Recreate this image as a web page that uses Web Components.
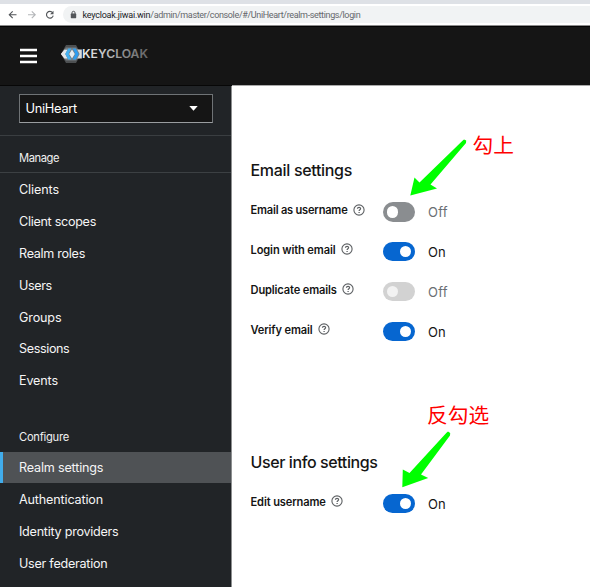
<!DOCTYPE html>
<html lang="en">
<head>
<meta charset="utf-8">
<title>Keycloak Administration Console</title>
<style>
html,body{margin:0;height:100%;overflow:hidden;background:#fff}
body{font-family:Inter,"Liberation Sans","Noto Sans CJK SC",sans-serif}
</style>
</head>
<body>
<admin-console></admin-console>
<script>
const define=(name,html,setup)=>customElements.define(name,class extends HTMLElement{
  connectedCallback(){
    if(this.shadowRoot)return;
    const t=document.createElement('template');
    t.innerHTML=html;
    this.attachShadow({mode:'open'}).append(t.content.cloneNode(true));
    if(setup)setup(this,this.shadowRoot);
  }
});

/* A single line of text tracked to the width given in its "w" attribute. */
define('tracked-text',`<style>:host{display:inline-block;white-space:pre}span{display:inline-block}</style><span><slot></slot></span>`,(el,root)=>{
  const s=root.querySelector('span'),n=el.textContent.length,w=+el.getAttribute('w');
  if(w)s.style.letterSpacing=((w-s.getBoundingClientRect().width)/n).toFixed(3)+'px';
});

define('browser-bar',`<style>
:host{display:block;height:26px;box-sizing:border-box;background:#fff;border-top:4px solid #dee1e6;border-bottom:1px solid #8b8b8b}
.row{display:flex;align-items:center;height:21px}
.icons{display:block;width:63px;height:21px;flex:none}
.url{flex:1;height:17px;border-radius:9px 0 0 9px;background:#f1f3f4;display:flex;align-items:center;font:9px/17px Roboto,"Liberation Sans",sans-serif;color:#64676b}
.lock{width:7px;height:9px;margin:0 6px 0 6.5px}
tracked-text{margin-top:1px}
.host{color:#202124}
</style>
<div class="row">
<svg class="icons" viewBox="0 0 63 21" fill="none" stroke-width="1.15"><path d="M16.5 10.7H9.5M12.7 7.3 9.3 10.7l3.4 3.4" stroke="#53565a"/><path d="M28 10.7h7M31.8 7.3l3.4 3.4-3.4 3.4" stroke="#b4b6b9"/><path d="M52.6 8.7a3.4 3.4 0 1 0 .6 2.9" stroke="#53565a"/><path d="M53.5 6.8v3.4h-3.4z" fill="#53565a"/></svg>
<div class="url"><svg class="lock" viewBox="0 0 7 9"><path d="M2 4V2.8a1.5 1.5 0 0 1 3 0V4" fill="none" stroke="#53565a"/><rect x=".8" y="3.6" width="5.4" height="4.6" rx=".6" fill="#53565a"/></svg><tracked-text w="67.8" class="host">keycloak.jiwai.win</tracked-text><tracked-text w="210">/admin/master/console/#/UniHeart/realm-settings/login</tracked-text></div>
</div>`);

define('keycloak-logo',`<style>:host{display:block;width:92px;height:22px}svg{display:block}</style>
<svg width="92" height="22" viewBox="0 0 92 22"><defs><linearGradient id="g" x1="0" x2="1"><stop stop-color="#eee"/><stop offset=".35" stop-color="#c4c4c4"/><stop offset=".65" stop-color="#8a8a8a"/><stop offset="1" stop-color="#666"/></linearGradient></defs>
<path d="M6 2h10l5 9-5 9H6l-5-9z" fill="#4d5052"/><path d="M4.5 6.5H21.8v9H4.5L1 11z" fill="#d9dbdc"/><path d="M5.8 4.5h10.4l3.4 6.5-3.4 6.5H5.8L2.4 11z" fill="#777d82"/><path d="M4.5 6.7h3L5.3 11l2.2 4.4h-3L1 11z" fill="#e4e6e8"/>
<path d="M8.2 5.5h3.1L8.6 11l2.7 5.5H8.2L5.2 11z" fill="#45b1f0"/><path d="M12.7 5.5h3.1l3 5.5-3 5.5h-3.1l2.7-5.5z" fill="#2e9df0"/><path d="M12 6.6 14.8 11 12 15.4 9.2 11z" fill="#e4edf3"/>
<text x="22" y="15" textLength="66" lengthAdjust="spacingAndGlyphs" font-family="Inter,sans-serif" font-size="11.9" font-weight="600" fill="url(#g)">KEYCLOAK</text></svg>`);

define('app-header',`<style>
:host{display:flex;align-items:center;height:60px;box-sizing:border-box;background:#151515;border-top:1px solid #030303;border-bottom:1px solid #070707;padding-left:20px}
.menu{width:17px;height:16px;margin-top:-1px;flex:none}
keycloak-logo{margin:-4px 0 0 22.5px}
</style><svg class="menu" viewBox="0 0 17 16"><path d="M0 2h17M0 8h17M0 14h17" stroke="#fff" stroke-width="2.5"/></svg><keycloak-logo></keycloak-logo>`);

define('realm-select',`<style>
:host{display:flex;align-items:center;justify-content:space-between;box-sizing:border-box;width:193.5px;height:29px;margin:8px 0 12px 19px;padding:0 14px 0 5.5px;border:1px solid #6f7376;border-bottom-color:#9a9da0;background:#151515;color:#fff;font-size:12.8px}
tracked-text{margin-top:1px}
svg{width:9px;height:5px;display:block}
</style><slot></slot><svg viewBox="0 0 9 5"><path d="M.3 0h8.4L4.5 4.8z" fill="#fff"/></svg>`);

define('nav-title',`<style>:host{display:flex;align-items:center;height:36px;padding:7px 0 0 19px;box-sizing:border-box;font-size:11.2px;color:#f0f0f0}</style><slot></slot>`);

define('nav-item',`<style>
:host{display:flex;align-items:center;height:31.9px;padding:1px 0 0 19px;box-sizing:border-box;font-size:12.6px;color:#f5f5f5}
:host([current]){background:#4f5255;border-left:3px solid #41aceb;padding-left:16px}
</style><slot></slot>`);

define('side-nav',`<style>
:host{display:block;width:231px;flex:none;background:#212427;overflow:hidden;border-right:1px solid #8d8f90;box-sizing:content-box}
.manage{border-top:1px solid #3a3e41;border-bottom:1px solid #3c4043}
.configure{margin-top:19.3px}
</style>
<realm-select><tracked-text w="51.5">UniHeart</tracked-text></realm-select>
<div class="manage"><nav-title><tracked-text w="40">Manage</tracked-text></nav-title></div>
<nav-item><tracked-text w="40">Clients</tracked-text></nav-item>
<nav-item><tracked-text w="77">Client scopes</tracked-text></nav-item>
<nav-item><tracked-text w="66">Realm roles</tracked-text></nav-item>
<nav-item><tracked-text w="32.7">Users</tracked-text></nav-item>
<nav-item><tracked-text w="42.4">Groups</tracked-text></nav-item>
<nav-item><tracked-text w="50.4">Sessions</tracked-text></nav-item>
<nav-item><tracked-text w="39">Events</tracked-text></nav-item>
<div class="configure"><nav-title><tracked-text w="50">Configure</tracked-text></nav-title></div>
<nav-item current><tracked-text w="84.3">Realm settings</tracked-text></nav-item>
<nav-item><tracked-text w="84">Authentication</tracked-text></nav-item>
<nav-item><tracked-text w="99.5">Identity providers</tracked-text></nav-item>
<nav-item><tracked-text w="88.5">User federation</tracked-text></nav-item>`);

define('help-icon',`<style>:host{display:block;width:12px;height:12px}svg{display:block}</style><svg width="12" height="12" viewBox="0 0 12 12" fill="none" stroke="#5d6063"><circle cx="6" cy="6" r="5.1" stroke-width="1.1"/><path d="M4.4 4.8C4.5 2.9 7.7 3 7.6 4.8 7.5 5.8 6.1 5.8 6.1 7" stroke-width="1.2"/><path d="M6.1 8v1.1" stroke-width="1.3"/></svg>`);

define('toggle-switch',`<style>
:host{display:flex;align-items:center;font-size:13px;color:#6a6e73}
i{display:block;width:32px;height:19.5px;border-radius:10px;background:#8a8d90;box-sizing:border-box;padding:4px 3.7px;margin-right:13px}
i:before{content:"";display:block;width:11.6px;height:11.6px;border-radius:50%;background:#fff}
:host([on]) i:before{margin-left:13px}
:host([on]){color:#151515}:host([on]) i{background:#0666d0}
:host([disabled]) i{background:#d2d2d2}:host([disabled]) i:before{background:#f2f2f2}
tracked-text{margin-top:1px}
</style><i></i><tracked-text></tracked-text>`,(el,root)=>{
  const on=el.hasAttribute('on'),old=root.querySelector('tracked-text'),t=document.createElement('tracked-text');
  t.setAttribute('w',on?17.5:20);
  t.textContent=on?'On':'Off';
  old.replaceWith(t);
});

define('setting-row',`<style>
:host{display:grid;grid-template-columns:132.5px 1fr;height:39.9px}
.label{display:flex;align-items:flex-start;gap:5px;font-size:11.1px;line-height:16px;font-weight:600;color:#151515}
help-icon{margin-top:1.5px}
::slotted(toggle-switch){align-self:start}
</style><div class="label"><slot></slot><help-icon></help-icon></div><slot name="control"></slot>`);

define('settings-section',`<style>
:host{display:block}
.title{height:24px;line-height:24px;font-size:16px;font-weight:500;color:#151515;margin-bottom:20px}
</style><div class="title"><slot name="title"></slot></div><slot></slot>`);

define('callout-note',`<style>
:host{position:absolute;color:#f00;font:20.7px/24px "Noto Sans CJK SC",sans-serif;white-space:nowrap}
</style><slot></slot>`);

define('callout-arrow',`<style>:host{position:absolute;width:60px;height:62px}svg{display:block;overflow:visible}</style>
<svg width="60" height="62" viewBox="0 0 60 62"></svg>`,(el,root)=>{
  root.querySelector('svg').innerHTML='<path fill="#0f0" d="'+el.getAttribute('shape')+'"/>';
});

define('login-settings',`<style>
:host{display:block;flex:1;position:relative;padding:72px 0 0 18.5px;box-sizing:border-box;background:#fff;border-top:1px solid #aaa;margin-top:-1px}
.info{margin-top:88px}
</style>
<settings-section><tracked-text slot="title" w="101.5">Email settings</tracked-text>
<setting-row><tracked-text w="97">Email as username</tracked-text><toggle-switch slot="control"></toggle-switch></setting-row>
<setting-row><tracked-text w="85">Login with email</tracked-text><toggle-switch slot="control" on></toggle-switch></setting-row>
<setting-row><tracked-text w="86.3">Duplicate emails</tracked-text><toggle-switch slot="control" disabled></toggle-switch></setting-row>
<setting-row><tracked-text w="62">Verify email</tracked-text><toggle-switch slot="control" on></toggle-switch></setting-row>
</settings-section>
<settings-section class="info"><tracked-text slot="title" w="127">User info settings</tracked-text>
<setting-row><tracked-text w="75.3">Edit username</tracked-text><toggle-switch slot="control" on></toggle-switch></setting-row>
</settings-section>
<callout-note style="left:240.5px;top:46px">勾上</callout-note>
<callout-note style="left:195px;top:316px">反勾选</callout-note>
<callout-arrow style="left:177px;top:53px" shape="M55 .5 57.2 1.5 57 4 21.5 45.5 28 49.5 1.3 56.5 5.5 38.5 10.5 43.5 53.5 1.7z"></callout-arrow>
<callout-arrow style="left:170px;top:345px" shape="M46 .5 48.2 2 48 4.5 19 43.5 26.2 47 .3 56.3.8 38.5 7.5 42 44.5 1.8z"></callout-arrow>`);

define('admin-console',`<style>
:host{display:flex;flex-direction:column;width:590px;height:587px;overflow:hidden}
main{display:flex;flex:1;min-height:0}
</style><browser-bar></browser-bar><app-header></app-header><main><side-nav></side-nav><login-settings></login-settings></main>`);
</script>
</body>
</html>
